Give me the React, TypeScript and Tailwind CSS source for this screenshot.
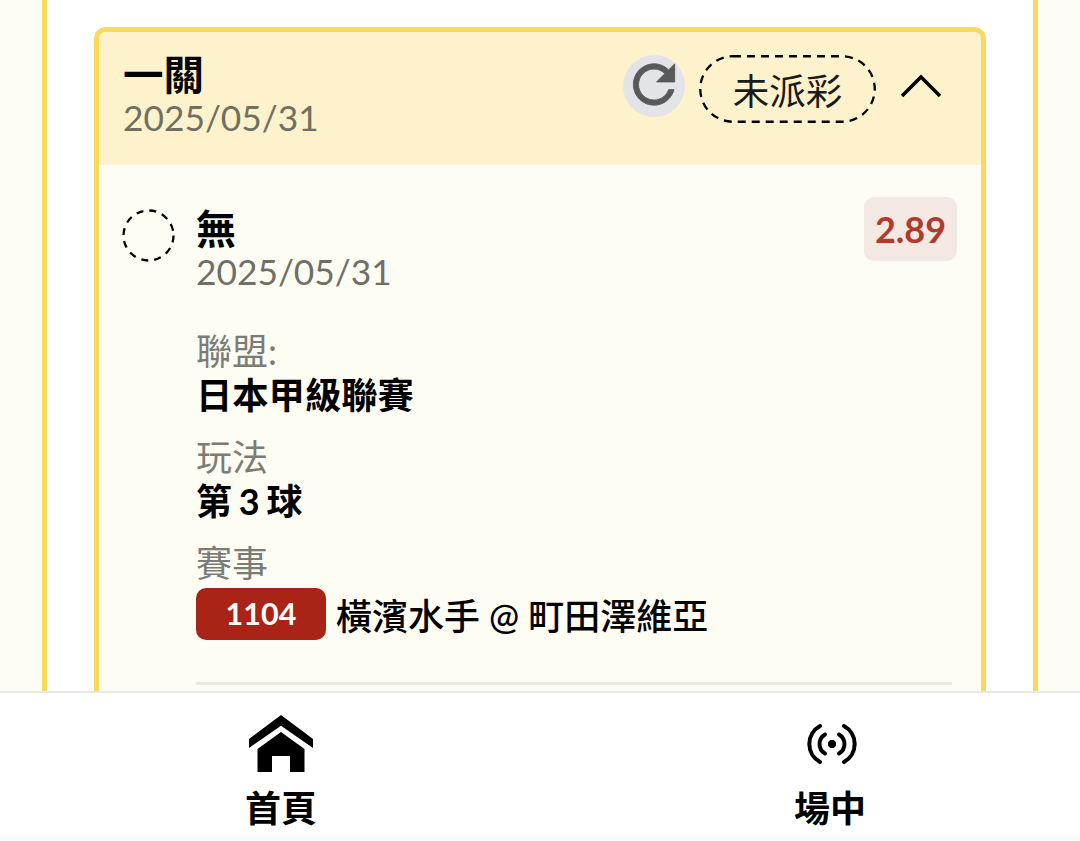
import type { ReactNode } from "react";

const fontStack = "font-['Lato','Noto_Sans_CJK_TC',sans-serif]";

function Field({ label, children }: { label: string; children: ReactNode }) {
    return (
        <div className="mb-[18px]">
            <div className="text-[36px] leading-[44px] text-[#7c7c76]">{label}</div>
            {children}
        </div>
    );
}

function HomeIcon() {
    return (
        <svg width="66" height="60" viewBox="0 0 66 60" fill="#000">
            <path d="M33 1 L65 25 V34 L33 11.7 L1 34 V25 Z" />
            <path d="M33 18 L56.5 35 V58 H42 V42 H24 V58 H9.5 V35 Z" />
        </svg>
    );
}

function BroadcastIcon() {
    return (
        <svg width="52" height="44" viewBox="0 0 52 44" fill="none" stroke="#000" strokeWidth="4" strokeLinecap="round">
            <path d="M19 12.5 A11 11 0 0 0 19 31.5" />
            <path d="M33 12.5 A11 11 0 0 1 33 31.5" />
            <path d="M14 4 A20.5 20.5 0 0 0 14 40" />
            <path d="M38 4 A20.5 20.5 0 0 1 38 40" />
            <circle cx="26" cy="22" r="4" fill="#000" stroke="none" />
        </svg>
    );
}

function RefreshIcon() {
    return (
        <svg className="mb-[4px]" width="63" height="63" viewBox="0 0 24 24" fill="#58595b" stroke="#58595b" strokeWidth="0.35">
            <path d="M17.65 6.35C16.2 4.9 14.21 4 12 4c-4.42 0-7.99 3.58-7.99 8s3.57 8 7.99 8c3.73 0 6.84-2.55 7.73-6h-2.08c-.82 2.33-3.04 4-5.65 4-3.31 0-6-2.69-6-6s2.69-6 6-6c1.66 0 3.14.69 4.22 1.78L13 11h7V4l-2.35 2.35z" />
        </svg>
    );
}

export default function App() {
    return (
        <div className={`flex h-[841px] w-[1080px] flex-col overflow-hidden bg-white text-black ${fontStack}`}>
            <main className="min-h-0 flex-1 overflow-hidden bg-[#fefdf4] px-[42px]">
                <div className="h-full border-x-[5px] border-[#f8da5b] bg-white px-[47px] pt-[27px]">
                    <div className="h-[800px] overflow-hidden rounded-[12px] border-[5px] border-[#f8da5b] bg-[#fefdf4]">
                        <div className="flex h-[133px] items-start justify-between bg-[#fdf2cb] pl-[24px] pr-[39px] pt-[21px]">
                            <div>
                                <div className="text-[40.5px] font-bold leading-[44px]">一關</div>
                                <div className="text-[35.3px] leading-[42px] text-[#6f6f62]">2025/05/31</div>
                            </div>
                            <div className="flex items-start">
                                <div className="mt-[2px] flex h-[62px] w-[62px] items-center justify-center rounded-full bg-[#e3e4e8]">
                                    <RefreshIcon />
                                </div>
                                <div className="relative ml-[14px] mt-[2px] flex h-[68px] w-[177px] items-center justify-center pt-[5px] text-[36.5px] text-[#1a1a1a]">
                                    <svg className="absolute inset-0" width="177" height="68" fill="none" stroke="#000" strokeWidth="2.3" strokeDasharray="8 6">
                                        <rect x="1.25" y="1.25" width="174.5" height="65.5" rx="32.75" />
                                    </svg>
                                    未派彩
                                </div>
                                <svg className="ml-[24px] mt-[20px]" width="42" height="26" viewBox="0 0 42 26" fill="none" stroke="#000" strokeWidth="3.5">
                                    <path d="M2 23 L21 4 L40 23" />
                                </svg>
                            </div>
                        </div>

                        <div className="pl-[23px] pr-[24px] pt-[32px]">
                            <div className="flex items-start">
                                <svg className="mt-[12px] shrink-0" width="53" height="53" fill="none" stroke="#000" strokeWidth="2.3" strokeDasharray="7 6.1">
                                    <circle cx="26.5" cy="26.5" r="25" />
                                </svg>
                                <div className="ml-[21px] flex-1 pt-[10px]">
                                    <div className="text-[40px] font-bold leading-[44px]">無</div>
                                    <div className="text-[35.3px] leading-[42px] text-[#6f6f68]">2025/05/31</div>
                                </div>
                                <div className="flex h-[64px] w-[93px] items-center justify-center rounded-[10px] bg-[#f3e8e2] text-[36px] font-bold text-[#b03a2e]">
                                    2.89
                                </div>
                            </div>

                            <div className="ml-[74px] mr-[5px] mt-[36px]">
                                <Field label="聯盟:">
                                    <div className="text-[36.3px] font-bold leading-[44px]">日本甲級聯賽</div>
                                </Field>
                                <Field label="玩法">
                                    <div className="text-[36px] font-bold leading-[44px] tracking-[-1px]">第 3 球</div>
                                </Field>
                                <div className="text-[36px] leading-[44px] text-[#7c7c76]">賽事</div>
                                <div className="mt-[3px] flex items-center">
                                    <div className="flex h-[52px] w-[130px] items-center justify-center rounded-[10px] bg-[#a92317] text-[30.5px] font-bold text-white">
                                        1104
                                    </div>
                                    <div className="ml-[10px] pt-[3px] text-[36px] font-medium leading-[44px]">橫濱水手 @ 町田澤維亞</div>
                                </div>
                                <div className="mt-[42px] h-[3px] bg-[#e8e8e2]" />
                            </div>
                        </div>
                    </div>
                </div>
            </main>

            <nav className="flex h-[150px] shrink-0 justify-between border-t-2 border-[#e8e8e6] bg-linear-to-b from-white from-[92%] to-[#f9f9f9] pl-[246px] pr-[215px] pt-[21px]">
                <div className="flex w-[70px] flex-col items-center">
                    <div className="flex h-[60px] items-center justify-center">
                        <HomeIcon />
                    </div>
                    <div className="mt-[12px] whitespace-nowrap text-[36px] font-bold leading-[44px]">首頁</div>
                </div>
                <div className="flex w-[70px] flex-col items-center">
                    <div className="ml-[3px] flex h-[60px] items-center justify-center">
                        <BroadcastIcon />
                    </div>
                    <div className="mt-[12px] whitespace-nowrap text-[36px] font-bold leading-[44px]">場中</div>
                </div>
            </nav>
        </div>
    );
}
